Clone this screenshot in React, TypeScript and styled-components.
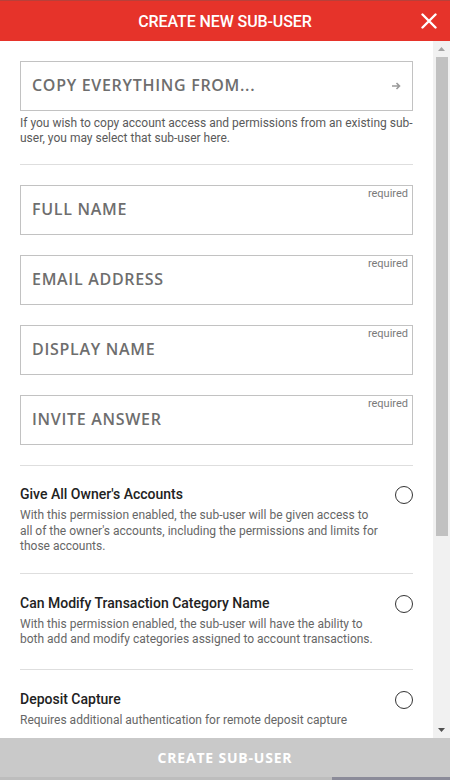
import React from "react";
import styled, { createGlobalStyle } from "styled-components";

const Global = createGlobalStyle`
  html, body { margin: 0; padding: 0; background: #fff; }
  body { font-family: Roboto, "Liberation Sans", sans-serif; }
  * { box-sizing: border-box; }
`;

const Frame = styled.div`
  width: 450px;
  height: 780px;
  display: flex;
  flex-direction: column;
  overflow: hidden;
  background: #fff;
`;

const Header = styled.header`
  height: 41px;
  flex: none;
  background: #e6332a;
  border-top: 1px solid #b8403a;
  display: flex;
  align-items: center;
  justify-content: center;
  position: relative;
`;

const Title = styled.h1`
  margin: 0;
  font-family: Roboto, sans-serif;
  font-weight: 500;
  font-size: 16px;
  color: #fff;
  letter-spacing: -0.1px;
`;

const Close = styled.button`
  position: absolute;
  right: 11px;
  top: 10px;
  width: 20px;
  height: 20px;
  padding: 0;
  border: 0;
  background: none;
  display: flex;
  align-items: center;
  justify-content: center;
`;

const Body = styled.div`
  flex: 1;
  display: flex;
  min-height: 0;
`;

const Content = styled.div`
  flex: 1;
  overflow: hidden;
  padding: 20px 20px 0 20px;
  display: flex;
  flex-direction: column;
`;

const Scrollbar = styled.div`
  width: 17px;
  flex: none;
  background: #f1f1f1;
  display: flex;
  flex-direction: column;
  align-items: center;
`;

const ScrollArrow = styled.div`
  height: 16px;
  width: 17px;
  flex: none;
  display: flex;
  align-items: center;
  justify-content: center;
`;

const Thumb = styled.div`
  width: 12px;
  height: 479px;
  background: #c1c1c1;
  flex: none;
`;

const Spacer = styled.div`
  flex: 1;
`;

const Field = styled.div`
  height: 50px;
  border: 1px solid #c2c2c2;
  display: flex;
  align-items: center;
  padding: 0 11px;
  position: relative;
  flex: none;
`;

const FieldLabel = styled.span`
  font-family: "Open Sans", sans-serif;
  font-weight: 600;
  font-size: 16px;
  color: #6e6e6e;
  letter-spacing: 0.7px;
  flex: 1;
  padding-bottom: 2px;
`;

const Required = styled.span`
  position: absolute;
  top: 1px;
  right: 4px;
  font-family: Roboto, sans-serif;
  font-size: 11px;
  color: #7a7a7a;
`;

const Help = styled.p`
  margin: 5px 0 0;
  font-family: Roboto, sans-serif;
  font-size: 12px;
  line-height: 15px;
  color: #5a5a5a;
`;

const Divider = styled.hr<{ $top: number; $bottom: number }>`
  border: 0;
  border-top: 1px solid #dedede;
  margin: ${(p) => p.$top}px 0 ${(p) => p.$bottom}px;
  flex: none;
`;

const FieldStack = styled.div`
  display: flex;
  flex-direction: column;
  gap: 20px;
`;

const Perm = styled.div`
  display: flex;
  align-items: flex-start;
  gap: 14px;
  flex: none;
`;

const PermText = styled.div`
  flex: 1;
`;

const PermTitle = styled.div`
  font-family: Roboto, sans-serif;
  font-weight: 500;
  font-size: 14px;
  line-height: 18px;
  color: #222;
`;

const PermDesc = styled.div`
  margin-top: 5px;
  font-family: Roboto, sans-serif;
  font-size: 12px;
  line-height: 15.5px;
  color: #666;
`;

const Radio = styled.span`
  width: 18px;
  height: 18px;
  border-radius: 50%;
  border: 1px solid #333;
  flex: none;
  margin-top: 1px;
`;

const Footer = styled.button`
  height: 39px;
  flex: none;
  width: 100%;
  border: 0;
  background: #c9c9c9;
  color: #fff;
  font-family: "Open Sans", sans-serif;
  font-weight: 700;
  font-size: 14px;
  letter-spacing: 0.8px;
  padding: 0;
`;

const BottomEdge = styled.div`
  height: 3px;
  flex: none;
  display: flex;
`;

const EdgePart = styled.div<{ $w?: number; $c: string }>`
  background: ${(p) => p.$c};
  ${(p) => (p.$w ? `width: ${p.$w}px;` : "flex: 1;")}
`;

const fields = ["FULL NAME", "EMAIL ADDRESS", "DISPLAY NAME", "INVITE ANSWER"];

const perms = [
  {
    title: "Give All Owner's Accounts",
    desc: "With this permission enabled, the sub-user will be given access to all of the owner's accounts, including the permissions and limits for those accounts.",
  },
  {
    title: "Can Modify Transaction Category Name",
    desc: "With this permission enabled, the sub-user will have the ability to both add and modify categories assigned to account transactions.",
  },
  {
    title: "Deposit Capture",
    desc: "Requires additional authentication for remote deposit capture",
  },
];

export default function App() {
  return (
    <Frame>
      <Global />
      <Header>
        <Title>CREATE NEW SUB-USER</Title>
        <Close aria-label="close">
          <svg width="16" height="16" viewBox="0 0 16 16">
            <path d="M1.5 1.5L14.5 14.5M14.5 1.5L1.5 14.5" stroke="#fff" strokeWidth="2.4" strokeLinecap="round" />
          </svg>
        </Close>
      </Header>
      <Body>
        <Content>
          <Field>
            <FieldLabel>COPY EVERYTHING FROM...</FieldLabel>
            <svg width="10" height="10" viewBox="0 0 10 10">
              <path d="M1 5H8.5M5.5 2L8.5 5L5.5 8" stroke="#9a9a9a" strokeWidth="1.6" fill="none" />
            </svg>
          </Field>
          <Help>
            If you wish to copy account access and permissions from an existing sub-user, you may select that sub-user here.
          </Help>
          <Divider $top={18} $bottom={20} />
          <FieldStack>
            {fields.map((f) => (
              <Field key={f}>
                <FieldLabel>{f}</FieldLabel>
                <Required>required</Required>
              </Field>
            ))}
          </FieldStack>
          <Divider $top={20} $bottom={19} />
          {perms.map((p, i) => (
            <React.Fragment key={p.title}>
              <Perm>
                <PermText>
                  <PermTitle>{p.title}</PermTitle>
                  <PermDesc>{p.desc}</PermDesc>
                </PermText>
                <Radio />
              </Perm>
              {i < perms.length - 1 && <Divider $top={i === 0 ? 18 : 21} $bottom={20} />}
            </React.Fragment>
          ))}
        </Content>
        <Scrollbar>
          <ScrollArrow>
            <svg width="7" height="4" viewBox="0 0 7 4">
              <path d="M0 4L3.5 0L7 4Z" fill="#a3a3a3" />
            </svg>
          </ScrollArrow>
          <Thumb />
          <Spacer />
          <ScrollArrow>
            <svg width="7" height="4" viewBox="0 0 7 4">
              <path d="M0 0L3.5 4L7 0Z" fill="#505050" />
            </svg>
          </ScrollArrow>
        </Scrollbar>
      </Body>
      <Footer>CREATE SUB-USER</Footer>
      <BottomEdge>
        <EdgePart $w={332} $c="#bdbdbd" />
        <EdgePart $c="#8b8b99" />
      </BottomEdge>
    </Frame>
  );
}
